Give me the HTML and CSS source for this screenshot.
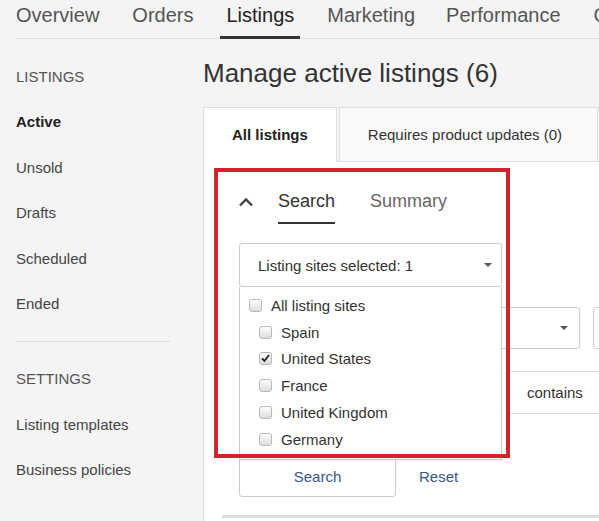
FILE: index.html
```html
<!DOCTYPE html>
<html lang="en">
<head>
    <meta charset="UTF-8">
    <title>Manage active listings</title>
    <link rel="stylesheet" href="styles.css">
</head>
<body>
    <nav class="top-nav">
        <a class="nav-item">Overview</a>
        <a class="nav-item">Orders</a>
        <a class="nav-item active">Listings</a>
        <a class="nav-item">Marketing</a>
        <a class="nav-item">Performance</a>
        <a class="nav-item">Growth</a>
    </nav>

    <div class="page">
        <aside class="side-nav">
            <div class="side-heading">LISTINGS</div>
            <a class="side-link active">Active</a>
            <a class="side-link">Unsold</a>
            <a class="side-link">Drafts</a>
            <a class="side-link">Scheduled</a>
            <a class="side-link">Ended</a>
            <hr class="side-divider">
            <div class="side-heading">SETTINGS</div>
            <a class="side-link">Listing templates</a>
            <a class="side-link">Business policies</a>
        </aside>

        <main class="content">
            <h1>Manage active listings (6)</h1>

            <div class="tabs">
                <div class="tab active">All listings</div>
                <div class="tab wide">Requires product updates (0)</div>
            </div>

            <div class="panel">
                <div class="search-box">
                    <div class="search-tabs">
                        <span class="collapse">
                            <svg width="16" height="10" viewBox="0 0 16 10">
                                <polyline points="2,8.5 8,2.5 14,8.5" fill="none" stroke="#444" stroke-width="2.4"/>
                            </svg>
                        </span>
                        <span class="search-tab active">Search</span>
                        <span class="search-tab">Summary</span>
                    </div>

                    <div class="site-picker">
                        <div class="select">
                            <span>Listing sites selected: 1</span>
                            <svg class="caret" width="8" height="4" viewBox="0 0 8 4"><polygon points="0,0 8,0 4,4" fill="#555"/></svg>
                        </div>
                        <ul class="site-menu">
                            <li class="site-row"><span class="check"></span>All listing sites</li>
                            <li class="site-row sub"><span class="check"></span>Spain</li>
                            <li class="site-row sub">
                                <span class="check">
                                    <svg width="11" height="11" viewBox="0 0 11 11"><polyline points="2,5.5 4.5,8 9,2" fill="none" stroke="#222" stroke-width="1.8"/></svg>
                                </span>United States
                            </li>
                            <li class="site-row sub"><span class="check"></span>France</li>
                            <li class="site-row sub"><span class="check"></span>United Kingdom</li>
                            <li class="site-row sub"><span class="check"></span>Germany</li>
                        </ul>
                    </div>

                    <div class="filter-row">
                        <div class="select field-wide">
                            <span></span>
                            <svg class="caret" width="8" height="4" viewBox="0 0 8 4"><polygon points="0,0 8,0 4,4" fill="#555"/></svg>
                        </div>
                        <div class="field"></div>
                    </div>

                    <div class="filter-row second">
                        <div class="field field-keyword"></div>
                        <div class="field field-match">contains</div>
                    </div>

                    <div class="actions">
                        <button class="btn">Search</button>
                        <button class="link-btn">Reset</button>
                    </div>
                </div>
                <div class="divider"></div>
            </div>
        </main>
    </div>

    <div class="highlight"></div>
</body>
</html>
```

FILE: styles.css
```css
body {
    font-family: "Liberation Sans", Arial, sans-serif;
    margin: 0;
    padding: 0;
    background: #f4f4f4;
    color: #333;
    position: relative;
    overflow: hidden;
    height: 521px;
}

/* top navigation */
.top-nav {
    display: flex;
    gap: 21px;
    margin-left: 16px;
    height: 38px;
    border-bottom: 1px solid #dcdcdc;
    white-space: nowrap;
}

.nav-item {
    font-size: 20px;
    line-height: 24px;
    padding: 3px 6px 12px;
    margin-bottom: -1px;
    color: #555;
    flex: none;
}

.nav-item:first-child {
    margin-left: -6px;
}

.nav-item:nth-child(5) {
    margin-left: -2px;
}

.nav-item.active {
    color: #222;
    box-shadow: inset 0 -3px 0 #333;
}

.page {
    display: flex;
}

/* left side menu */
.side-nav {
    flex: none;
    width: 187px;
    padding: 15px 0 0 16px;
}

.side-heading,
.side-link {
    display: block;
    font-size: 15px;
    line-height: 45.4px;
}

.side-heading {
    color: #555;
}

.side-link {
    color: #444;
}

.side-link.active {
    font-weight: bold;
    color: #222;
}

.side-divider {
    border: 0;
    border-top: 1px solid #ddd;
    width: 154px;
    margin: 15px 0 14px 0;
}

/* main column */
.content {
    flex: 1;
    min-width: 0;
    padding-top: 19px;
}

h1 {
    margin: 0;
    font-size: 26px;
    line-height: 30px;
    font-weight: normal;
    color: #333;
}

.tabs {
    display: flex;
    gap: 2px;
    margin-top: 19px;
    margin-bottom: -1px;
    position: relative;
}

.tab {
    flex: none;
    font-size: 15px;
    line-height: 19px;
    padding: 17px 28px;
    border: 1px solid #ddd;
    background: #fafafa;
    color: #333;
    white-space: nowrap;
}

.tab.wide {
    padding-right: 35px;
}

.tab.active {
    background: #fff;
    border-bottom-color: #fff;
    font-weight: bold;
    color: #222;
}

.panel {
    background: #fff;
    border-top: 1px solid #ddd;
    border-left: 1px solid #ddd;
    padding: 28px 0 0 18px;
    height: 400px;
}

.search-box {
    padding-left: 17px;
}

.search-tabs {
    display: flex;
    align-items: flex-start;
}

.collapse {
    width: 16px;
    height: 10px;
    margin: 7px 24px 0 -1px;
    display: flex;
}

.search-tab {
    font-size: 18px;
    line-height: 22px;
    padding-bottom: 10px;
    margin-right: 35px;
    color: #666;
}

.search-tab.active {
    color: #333;
    border-bottom: 2px solid #333;
}

/* listing site dropdown */
.site-picker {
    position: relative;
    width: 263px;
    margin-top: 19px;
}

.select {
    height: 44px;
    box-sizing: border-box;
    border: 1px solid #ccc;
    border-radius: 3px;
    background: #fff;
    display: flex;
    align-items: center;
    justify-content: space-between;
    padding: 0 9px 0 18px;
    font-size: 15px;
    color: #333;
}

.caret {
    flex: none;
}

.site-menu {
    position: absolute;
    top: 44px;
    left: 0;
    width: 100%;
    box-sizing: border-box;
    margin: 0;
    padding: 5px 0 6px;
    list-style: none;
    background: #fff;
    border: 1px solid #ccc;
    border-top: 0;
    z-index: 2;
}

.site-row {
    display: flex;
    align-items: center;
    height: 26.8px;
    padding-left: 9px;
    font-size: 15px;
    color: #333;
}

.site-row.sub {
    padding-left: 19px;
}

.check {
    flex: none;
    width: 13px;
    height: 13px;
    box-sizing: border-box;
    border: 1px solid #b8b8b8;
    border-radius: 3px;
    background: linear-gradient(#fdfdfd, #dcdcdc);
    margin-right: 9px;
    display: flex;
    align-items: center;
    justify-content: center;
}

/* filter fields */
.filter-row {
    display: flex;
    gap: 13px;
    margin-top: 20px;
}

.filter-row .select {
    height: 42px;
    padding-right: 11px;
}

.field-wide {
    width: 341px;
    flex: none;
}

.field {
    flex: none;
    width: 200px;
    height: 42px;
    box-sizing: border-box;
    border: 1px solid #ccc;
    border-radius: 3px;
    background: #fff;
}

.filter-row.second {
    margin-top: 22px;
}

.filter-row.second .field {
    height: 43px;
    border-color: #ddd;
}

.field-keyword {
    width: 256px;
}

.field-match {
    display: flex;
    align-items: center;
    padding-left: 18px;
    font-size: 15px;
    color: #333;
    border-radius: 0;
}

.actions {
    display: flex;
    align-items: center;
    margin-top: 41px;
}

.btn {
    width: 157px;
    height: 42px;
    border: 1px solid #ccc;
    border-radius: 3px;
    background: #fff;
    color: #34588a;
    font-family: inherit;
    font-size: 15px;
}

.link-btn {
    margin-left: 23px;
    padding: 0;
    border: 0;
    background: none;
    color: #34588a;
    font-family: inherit;
    font-size: 15px;
}

.divider {
    height: 3px;
    background: #ddd;
    margin-top: 18px;
}

/* red outline drawn over the search area */
.highlight {
    position: absolute;
    left: 214px;
    top: 168px;
    width: 296px;
    height: 290px;
    box-sizing: border-box;
    border: 4px solid #d2222c;
    z-index: 5;
}
```
